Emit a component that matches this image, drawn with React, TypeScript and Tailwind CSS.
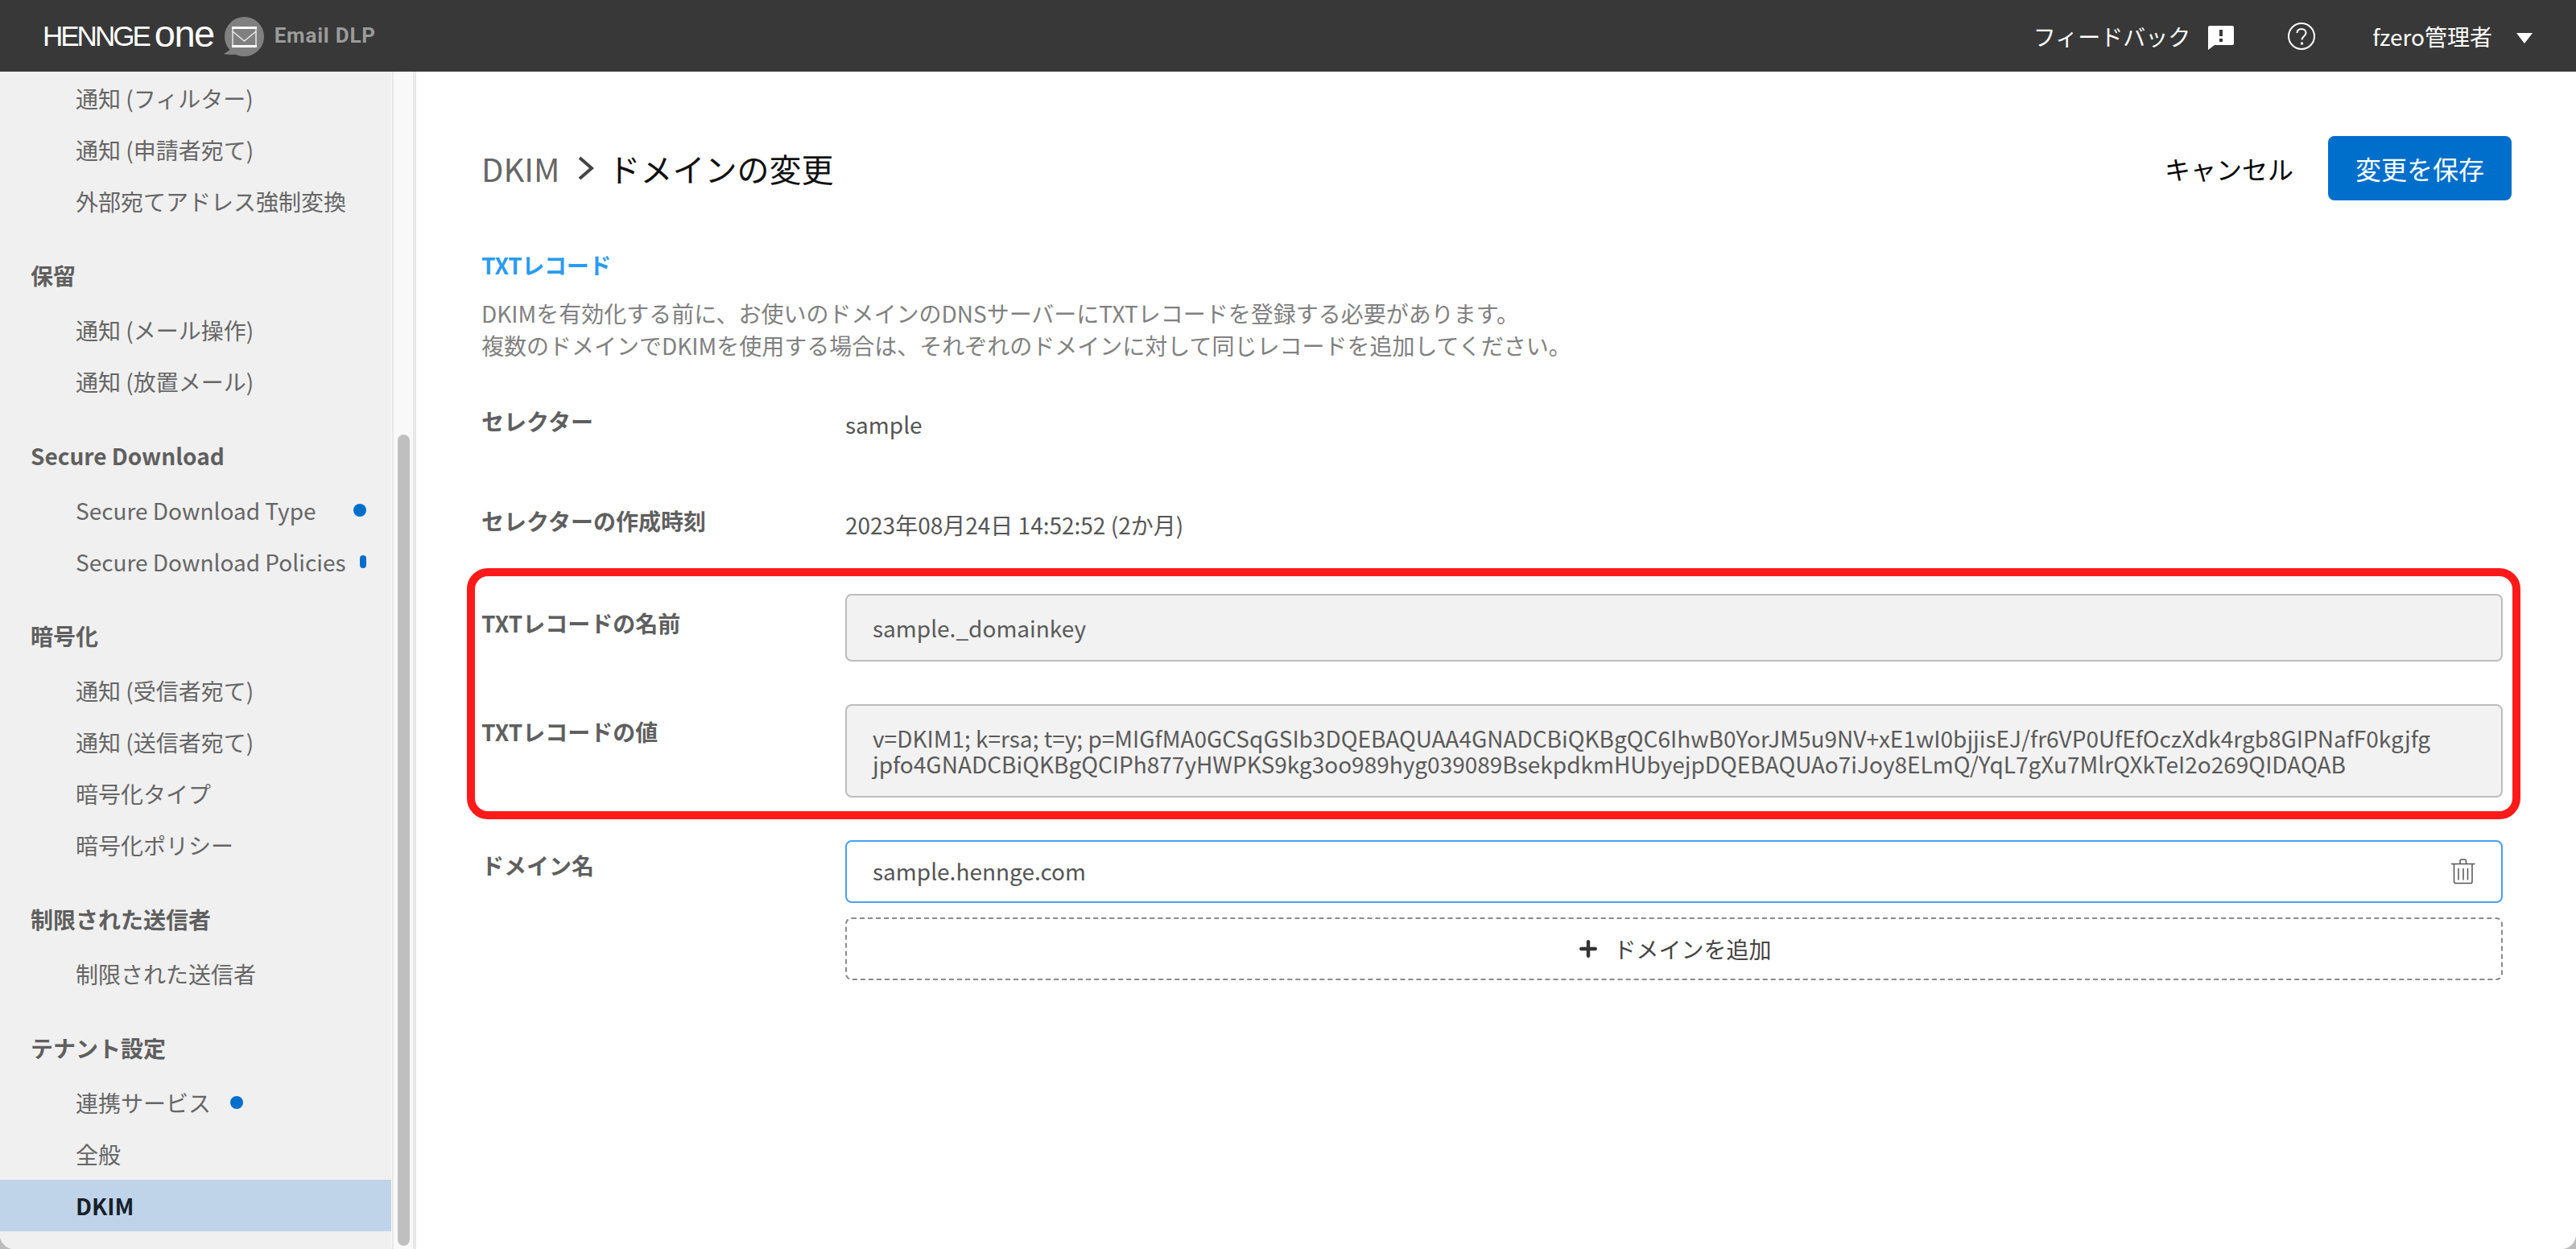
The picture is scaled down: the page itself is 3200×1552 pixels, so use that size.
import { Plus } from 'lucide-react';

const jp = "font-['Noto_Sans_CJK_JP','Noto_Sans',sans-serif]";

interface NavItem {
  label: string;
  dot?: 'near' | 'far' | 'squeezed';
  active?: boolean;
}

const navSections: { title?: string; items: NavItem[] }[] = [
  { items: [{ label: '通知 (フィルター)' }, { label: '通知 (申請者宛て)' }, { label: '外部宛てアドレス強制変換' }] },
  { title: '保留', items: [{ label: '通知 (メール操作)' }, { label: '通知 (放置メール)' }] },
  {
    title: 'Secure Download',
    items: [
      { label: 'Secure Download Type', dot: 'far' },
      { label: 'Secure Download Policies', dot: 'squeezed' },
    ],
  },
  {
    title: '暗号化',
    items: [
      { label: '通知 (受信者宛て)' },
      { label: '通知 (送信者宛て)' },
      { label: '暗号化タイプ' },
      { label: '暗号化ポリシー' },
    ],
  },
  { title: '制限された送信者', items: [{ label: '制限された送信者' }] },
  {
    title: 'テナント設定',
    items: [{ label: '連携サービス', dot: 'near' }, { label: '全般' }, { label: 'DKIM', active: true }],
  },
];

const Header = () => (
  <header className="flex h-[89px] shrink-0 items-center bg-[#383838] pl-[53px] pr-[54px] text-white">
    <div className="flex items-center">
      <span className="font-['Liberation_Sans',sans-serif] text-[35px] leading-none tracking-[-3px]">HENNGE</span>
      <span className="relative top-[-3px] ml-[7px] font-['Liberation_Sans',sans-serif] text-[47px] leading-none tracking-[-1.5px]">one</span>
      <svg className="ml-[12px] mt-[2px]" width="50" height="50" viewBox="0 0 50 50">
        <circle cx="25.500" cy="24.500" r="24.500" fill="#808080" />
        <path d="M9 40L0 46Q9 48 18 46Z" fill="#808080" />
        <rect x="10" y="12" width="31" height="3" fill="#fff" />
        <rect x="10" y="35" width="31" height="3" fill="#fff" />
        <path d="M11 15V35M40 15V35M11 18L25.500 30L40 18" fill="none" stroke="#e8e8e8" strokeWidth="1.500" />
      </svg>
      <span className="ml-[13px] font-['Roboto',sans-serif] text-[26px] font-bold tracking-[0.8px] text-[#9b9b9b]">Email DLP</span>
    </div>
    <div className={`ml-auto flex items-center text-[28px] ${jp}`}>
      <span>フィードバック</span>
      <svg className="ml-[22px] mt-[5px]" width="32" height="30" viewBox="0 0 32 30">
        <path d="M2 0H30A2 2 0 0 1 32 2V22A2 2 0 0 1 30 24H8L0 30V2A2 2 0 0 1 2 0Z" fill="#fff" />
        <rect x="14" y="5" width="4" height="8" fill="#383838" />
        <rect x="14" y="16" width="4" height="4" fill="#383838" />
      </svg>
      <svg className="ml-[67px]" width="34" height="34" viewBox="0 0 34 34">
        <circle cx="17" cy="17" r="16" fill="none" stroke="#fff" strokeWidth="2" />
        <path d="M11.500 13C11.500 9.500 14 8 17 8S22.500 10 22.500 13C22.500 17 17.500 17 17.500 21.500" fill="none" stroke="#fff" strokeWidth="2" />
        <circle cx="17.500" cy="26" r="1.700" fill="#fff" />
      </svg>
      <span className="ml-[71px]">fzero管理者</span>
      <span className="ml-[30px] mt-[5px] h-0 w-0 border-x-[10.500px] border-t-[13px] border-x-transparent border-t-white" />
    </div>
  </header>
);

const Sidebar = () => (
  <aside className={`flex w-[517px] shrink-0 bg-[#f9f9f9] ${jp}`}>
    <nav className="w-[486px] shrink-0 overflow-hidden bg-[#f0f0f0] pt-px text-[28px] text-[#666666]">
      {navSections.map((section, i) => (
        <div key={i}>
          {section.title && (
            <div className="mb-[16px] mt-[40px] flex h-[40px] items-center pl-[38px] font-bold leading-none text-[#5f5f5f]">
              {section.title}
            </div>
          )}
          {section.items.map(item => (
            <div
              key={item.label}
              className={`flex h-[64px] items-center pl-[94px] ${item.active ? 'bg-[#bfd4e9] font-bold text-[#17202a]' : ''}`}
            >
              <span className="whitespace-nowrap">{item.label}</span>
              {item.dot === 'near' && <span className="ml-[24px] h-[16px] w-[16px] rounded-full bg-[#006fcb]" />}
              {item.dot === 'far' && <span className="ml-[46px] h-[16px] w-[16px] rounded-full bg-[#006fcb]" />}
              {item.dot === 'squeezed' && <span className="ml-[17px] h-[16px] w-[8px] rounded-full bg-[#006fcb]" />}
            </div>
          ))}
        </div>
      ))}
    </nav>
    <div className="ml-px w-[2px] bg-[#e8e8e8]" />
    <div className="ml-[5px] w-[16px] pb-[4px] pt-[451px]">
      <div className="h-full rounded-[8px] bg-[#bfbfbf]" />
    </div>
    <div className="ml-[4px] w-[4px] bg-[#e8e8e8]" />
  </aside>
);

const Field = ({ label, className, children }: { label: string; className: string; children: React.ReactNode }) => (
  <div className={`flex ${className}`}>
    <div className="w-[452px] shrink-0 text-[28px] font-bold leading-[40px] text-[#5f5f5f]">{label}</div>
    <div className="min-w-0 flex-1">{children}</div>
  </div>
);

const ReadOnlyBox = ({ className, children }: { className: string; children: React.ReactNode }) => (
  <div className={`flex items-center rounded-[8px] border-2 border-[#bdbdbd] bg-[#f2f2f2] px-[32px] text-[#5a5a5a] ${className}`}>
    {children}
  </div>
);

const TrashIcon = () => (
  <svg className="ml-auto shrink-0" width="30" height="32" viewBox="0 0 30 32" fill="none" stroke="#555555" strokeWidth="1.500">
    <path d="M0 6.500H29.500" />
    <path d="M11 6.500V3A2 2 0 0 1 13 1H16.500A2 2 0 0 1 18.500 3V6.500" />
    <path d="M3.500 6.500V28.500A2 2 0 0 0 5.500 30.500H24A2 2 0 0 0 26 28.500V6.500" />
    <path d="M9 12V26.500M15 12V26.500M20.500 12V26.500" />
  </svg>
);

const MainContent = () => (
  <main className={`relative min-w-0 flex-1 pl-[81px] pr-[80px] ${jp}`}>
    <div className="mt-[80px] flex h-[80px] items-center">
      <h1 className="flex items-center text-[40px] font-normal leading-none">
        <span className="text-[#666666]">DKIM</span>
        <svg className="ml-[22px] mr-[18px]" width="20" height="30" viewBox="0 0 20 30">
          <path d="M2 2L17 15L2 28" fill="none" stroke="#444444" strokeWidth="4" />
        </svg>
        <span className="text-[#111111]">ドメインの変更</span>
      </h1>
      <div className="ml-auto flex items-center">
        <button className="text-[32px] leading-none text-black">キャンセル</button>
        <button className="ml-[43px] h-[80px] w-[228px] rounded-[8px] bg-[#006fcb] text-[32px] text-white">変更を保存</button>
      </div>
    </div>

    <div className="pr-[11px]">
      <h2 className="mt-[60px] text-[28px] font-bold leading-[40px] tracking-[-0.3px] text-[#2a9bf0]">TXTレコード</h2>
      <p className="mt-[20px] text-[28px] leading-[40px] text-[#808080]">
        DKIMを有効化する前に、お使いのドメインのDNSサーバーにTXTレコードを登録する必要があります。
        <br />
        複数のドメインでDKIMを使用する場合は、それぞれのドメインに対して同じレコードを追加してください。
      </p>

      <Field label="セレクター" className="mt-[54px]">
        <div className="pt-[4px] text-[28px] leading-[40px] text-[#555555]">sample</div>
      </Field>
      <Field label="セレクターの作成時刻" className="mt-[80px]">
        <div className="pt-[5px] text-[28px] leading-[40px] text-[#555555]">2023年08月24日 14:52:52 (2か月)</div>
      </Field>
      <Field label="TXTレコードの名前" className="mt-[82px]">
        <ReadOnlyBox className="-mt-[16px] h-[84px] text-[28px]">sample._domainkey</ReadOnlyBox>
      </Field>
      <Field label="TXTレコードの値" className="mt-[67px]">
        <ReadOnlyBox className="-mt-[14px] h-[116px] text-[28px] leading-[32px]">
          <span className="break-all">
            v=DKIM1; k=rsa; t=y; p=MIGfMA0GCSqGSIb3DQEBAQUAA4GNADCBiQKBgQC6IhwB0YorJM5u9NV+xE1wI0bjjisEJ/fr6VP0UfEfOczXdk4rgb8GIPNafF0kgjfg
            <br />
            jpfo4GNADCBiQKBgQCIPh877yHWPKS9kg3oo989hyg039089BsekpdkmHUbyejpDQEBAQUAo7iJoy8ELmQ/YqL7gXu7MlrQXkTeI2o269QIDAQAB
          </span>
        </ReadOnlyBox>
      </Field>
      <Field label="ドメイン名" className="mt-[64px]">
        <div className="-mt-[11px] flex h-[78px] items-center rounded-[8px] border-2 border-[#4a9ff0] px-[32px] text-[28px] text-[#555555]">
          <span className="-mt-[2px]">sample.hennge.com</span>
          <TrashIcon />
        </div>
        <div className="mt-[18px] flex h-[78px] items-center justify-center rounded-[8px] border-2 border-dashed border-[#8a8a8a] text-[28px] text-[#444444]">
          <Plus className="mr-[16px] h-[30px] w-[30px] text-[#333333]" strokeWidth={3.5} />
          ドメインを追加
        </div>
      </Field>
    </div>

    <div className="pointer-events-none absolute left-[63px] right-[69px] top-[617px] h-[312px] rounded-[26px] border-[10px] border-[#ff1a1a]" />
  </main>
);

const App = () => (
  <div className="h-[1552px] bg-[#bcbcbc]">
    <div className="flex h-full flex-col overflow-hidden rounded-b-[18px] bg-white">
      <Header />
      <div className="flex min-h-0 flex-1">
        <Sidebar />
        <MainContent />
      </div>
    </div>
  </div>
);

export default App;
